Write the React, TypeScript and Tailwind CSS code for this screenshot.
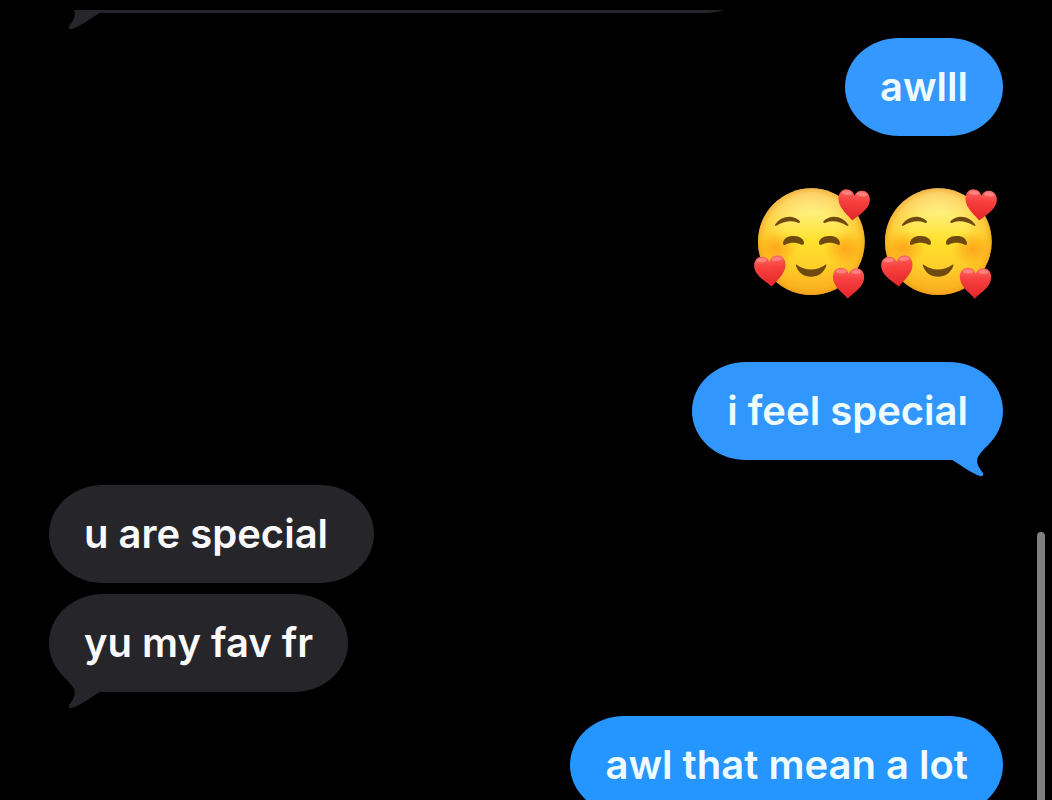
import { useId } from "react";
import type { ReactNode } from "react";
import clsx from "clsx";

type Side = "sent" | "received";

interface BubbleProps {
  side: Side;
  tail?: boolean;
  className?: string;
  children?: ReactNode;
}

function Tail({ side }: { side: Side }) {
  return (
    <svg
      viewBox="0 0 48 36"
      aria-hidden="true"
      className={clsx(
        "absolute -bottom-[18px] h-9 w-12 fill-current",
        side === "sent" ? "right-[9px]" : "left-[9px] -scale-x-100"
      )}
    >
      <path d="M0 17C3 17 5 17 8 19C16 24 25 31 34 34C36 35 38 33 37 31C34 27 29 21 32 15C34 11 38 7 43 2L20 0L0 8Z" />
    </svg>
  );
}

function Bubble({ side, tail, className, children }: BubbleProps) {
  return (
    <li
      className={clsx(
        "relative flex h-[98px] shrink-0 items-center rounded-[54px/49px] pl-[35px]",
        side === "sent" ? "self-end" : "self-start",
        className
      )}
    >
      {tail && <Tail side={side} />}
      <p
        className={clsx(
          "relative text-[40px] leading-[50px] font-semibold whitespace-nowrap",
          side === "sent" ? "text-[#effcff]" : "text-[#fafafc]"
        )}
      >
        {children}
      </p>
    </li>
  );
}

function Heart({ x, y, rotate, fill }: { x: number; y: number; rotate: number; fill: string }) {
  return (
    <g transform={`translate(${x} ${y}) rotate(${rotate})`}>
      <path
        d="M0 48C-9 36 -45 15 -47 -14C-48 -33 -37 -44 -23 -44C-12 -44 -4 -38 0 -27C4 -38 12 -44 23 -44C37 -44 48 -33 47 -14C45 15 9 36 0 48Z"
        fill={fill}
      />
      <ellipse cx="-23" cy="-33" rx="15" ry="6" fill="#ffaaa4" opacity="0.5" />
      <ellipse cx="23" cy="-33" rx="15" ry="6" fill="#ffaaa4" opacity="0.5" />
    </g>
  );
}

function HeartsFace() {
  const id = useId();
  const face = `${id}-face`;
  const rim = `${id}-rim`;
  const blush = `${id}-blush`;
  const heart = `${id}-heart`;

  return (
    <svg
      viewBox="27 24 381 360"
      role="img"
      aria-label="smiling face with hearts"
      className="h-[120px] w-[127px]"
    >
      <defs>
        <linearGradient id={face} x1="0" y1="0" x2="0" y2="1">
          <stop offset="0" stopColor="#fff3a8" />
          <stop offset="0.22" stopColor="#fff07c" />
          <stop offset="0.5" stopColor="#ffe02c" />
          <stop offset="0.78" stopColor="#ffcb2b" />
          <stop offset="1" stopColor="#f9b222" />
        </linearGradient>
        <radialGradient id={rim}>
          <stop offset="0.55" stopColor="#f9a81a" stopOpacity="0" />
          <stop offset="0.88" stopColor="#f9a81a" stopOpacity="0.38" />
          <stop offset="1" stopColor="#f09a18" stopOpacity="0.7" />
        </radialGradient>
        <radialGradient id={blush}>
          <stop offset="0" stopColor="#fb7a10" stopOpacity="0.5" />
          <stop offset="0.5" stopColor="#fb8410" stopOpacity="0.3" />
          <stop offset="1" stopColor="#ff9410" stopOpacity="0" />
        </radialGradient>
        <linearGradient id={heart} x1="0" y1="0" x2="0" y2="1">
          <stop offset="0" stopColor="#fb6a66" />
          <stop offset="0.35" stopColor="#f8413f" />
          <stop offset="1" stopColor="#e2252a" />
        </linearGradient>
      </defs>
      <circle cx="214" cy="200" r="160" fill={`url(#${face})`} />
      <circle cx="214" cy="200" r="160" fill={`url(#${rim})`} />
      <ellipse cx="112" cy="220" rx="64" ry="54" fill={`url(#${blush})`} />
      <ellipse cx="314" cy="220" rx="64" ry="54" fill={`url(#${blush})`} />
      <g fill="#6f4a10">
        <path d="M105 149C116 132 133 124 151 125C163 126 173 131 179 138C182 142 179 145 174 143C151 135 130 140 109 152C106 153 103 152 105 149Z" />
        <path d="M325 149C314 132 297 124 279 125C267 126 257 131 251 138C248 142 251 145 256 143C279 135 300 140 321 152C324 153 327 152 325 149Z" />
        <path d="M129 204C132 188 145 182 162 183C180 184 191 191 192 203C192 210 187 211 181 208C168 202 152 202 139 208C133 211 128 210 129 204Z" />
        <path d="M300 204C297 188 284 182 267 183C249 184 238 191 237 203C237 210 242 211 248 208C261 202 277 202 290 208C296 211 301 210 300 204Z" />
        <path d="M170 269C194 288 232 288 256 269C259 268 260 270 259 273C251 294 234 305 213 305C192 305 175 294 168 273C167 270 167 268 170 269Z" />
      </g>
      <Heart x={341} y={89} rotate={5} fill={`url(#${heart})`} />
      <Heart x={91} y={287} rotate={-5} fill={`url(#${heart})`} />
      <Heart x={325} y={323} rotate={2} fill={`url(#${heart})`} />
    </svg>
  );
}

export default function App() {
  return (
    <main className="relative flex h-screen flex-col overflow-hidden bg-black font-['Inter','Liberation_Sans',sans-serif]">
      <div className="relative z-10 h-[10px] shrink-0 bg-black" />
      <ul className="flex flex-col px-[49px]">
        {/* earlier message, scrolled under the top edge */}
        <Bubble side="received" tail className="-mt-[95px] w-full max-w-[710px] bg-[#26252a] text-[#26252a]" />
        <Bubble side="sent" className="mt-[25px] bg-[#3598ff] pr-[35px]">
          awlll
        </Bubble>
        <li className="mt-[47px] flex self-end">
          <HeartsFace />
          <HeartsFace />
        </li>
        <Bubble side="sent" tail className="mt-[59px] bg-[#3197ff] pr-[35px] text-[#3197ff]">
          i feel special
        </Bubble>
        <Bubble side="received" className="mt-[25px] bg-[#26252a] pr-[46px]">
          u are special
        </Bubble>
        <Bubble side="received" tail className="mt-[11px] bg-[#26252a] pr-[35px] text-[#26252a]">
          yu my fav fr
        </Bubble>
        <Bubble side="sent" className="mt-[24px] bg-[#2595ff] pr-[35px]">
          awl that mean a lot
        </Bubble>
      </ul>
      <div className="absolute top-[532px] right-[7px] bottom-0 w-2 rounded-t-full bg-[#7f7f7f]" />
    </main>
  );
}
